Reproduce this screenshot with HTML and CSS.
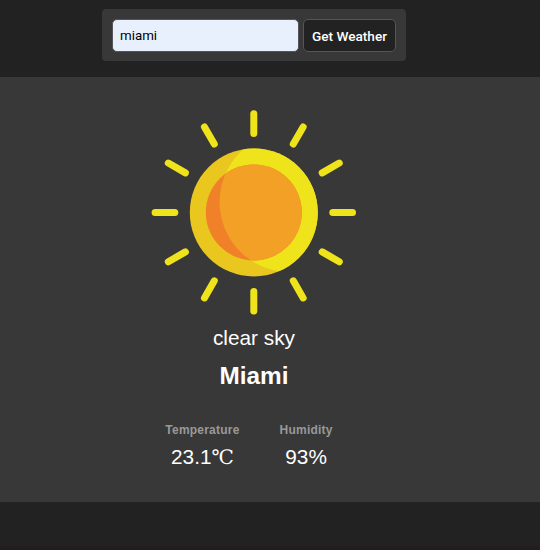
FILE: index.html
```html
<!DOCTYPE html>
<html lang="en">
<head>
<meta charset="utf-8">
<title>Weather</title>
<link rel="stylesheet" href="styles.css">
</head>
<body>
<header class="top">
  <form class="search">
    <input class="city-input" type="text" value="miami">
    <button class="submit" type="button">Get Weather</button>
  </form>
</header>
<main class="weather">
  <div class="content">
    <svg class="sun" viewBox="-103.8 -103.4 208 208">
      <defs>
        <clipPath id="lit"><circle cx="36" cy="-10.5" r="70.2"/></clipPath>
        <path id="ray" d="M0-98.7V-79"/>
      </defs>
      <circle r="64" fill="#eac71e"/>
      <circle r="64" fill="#efe31c" clip-path="url(#lit)"/>
      <circle r="48" fill="#f08128"/>
      <circle r="48" fill="#f3a026" clip-path="url(#lit)"/>
      <g stroke="#efe31c" stroke-width="7" stroke-linecap="round">
        <use href="#ray"/>
        <use href="#ray" transform="rotate(30)"/>
        <use href="#ray" transform="rotate(60)"/>
        <use href="#ray" transform="rotate(90)"/>
        <use href="#ray" transform="rotate(120)"/>
        <use href="#ray" transform="rotate(150)"/>
        <use href="#ray" transform="rotate(180)"/>
        <use href="#ray" transform="rotate(210)"/>
        <use href="#ray" transform="rotate(240)"/>
        <use href="#ray" transform="rotate(270)"/>
        <use href="#ray" transform="rotate(300)"/>
        <use href="#ray" transform="rotate(330)"/>
      </g>
    </svg>
    <p class="description">clear sky</p>
    <h1 class="city">Miami</h1>
    <dl class="stats">
      <div class="stat"><dt>Temperature</dt><dd>23.1<span class="unit">℃</span></dd></div>
      <div class="stat"><dt>Humidity</dt><dd>93%</dd></div>
    </dl>
  </div>
</main>
<footer class="footer"></footer>
</body>
</html>
```
FILE: styles.css
```css
* { box-sizing: border-box; }
body {
  margin: 0;
  height: 550px;
  overflow: hidden;
  background: #222;
  color: #fff;
  font-family: "Liberation Sans", Arial, sans-serif;
}
.top { height: 77px; padding: 9px 0 0 102px; }
.search {
  display: flex;
  gap: 4px;
  width: 304px;
  height: 52px;
  padding: 10px;
  background: #383838;
  border-radius: 4px;
}
.city-input, .submit {
  height: 33px;
  border: 1px solid #555;
  border-radius: 5px;
  font-family: Roboto, sans-serif;
}
.city-input {
  width: 187px;
  padding: 0 7px;
  background: #e8f0fe;
  color: #000;
  font-size: 13.33px;
}
.submit {
  width: 93px;
  padding: 0;
  background: #222;
  color: #fff;
  font-size: 13.6px;
  font-weight: 500;
  white-space: nowrap;
}
.weather { height: 425px; background: #383838; }
.content {
  display: flex;
  flex-direction: column;
  align-items: center;
  width: 508px;
  padding-top: 32px;
}
.sun { display: block; width: 208px; height: 208px; }
.description { margin: 9px 0 0; font-size: 20.8px; line-height: 24px; }
.city { margin: 12px 0 0; font-size: 24.3px; line-height: 28px; }
.stats { display: flex; gap: 40px; margin: 33px 0 0; padding-right: 10px; }
.stat { text-align: center; }
.stat dt {
  color: #999;
  font-size: 12px;
  font-weight: 700;
  line-height: 14px;
  letter-spacing: 0.22px;
}
.stat dd { margin: 8px 0 0; font-size: 20.8px; line-height: 24px; }
.unit { font-family: "Liberation Serif", "DejaVu Serif", serif; font-size: 20px; line-height: 1; }
.footer { height: 48px; border-bottom: 4px solid #241c20; }
```
